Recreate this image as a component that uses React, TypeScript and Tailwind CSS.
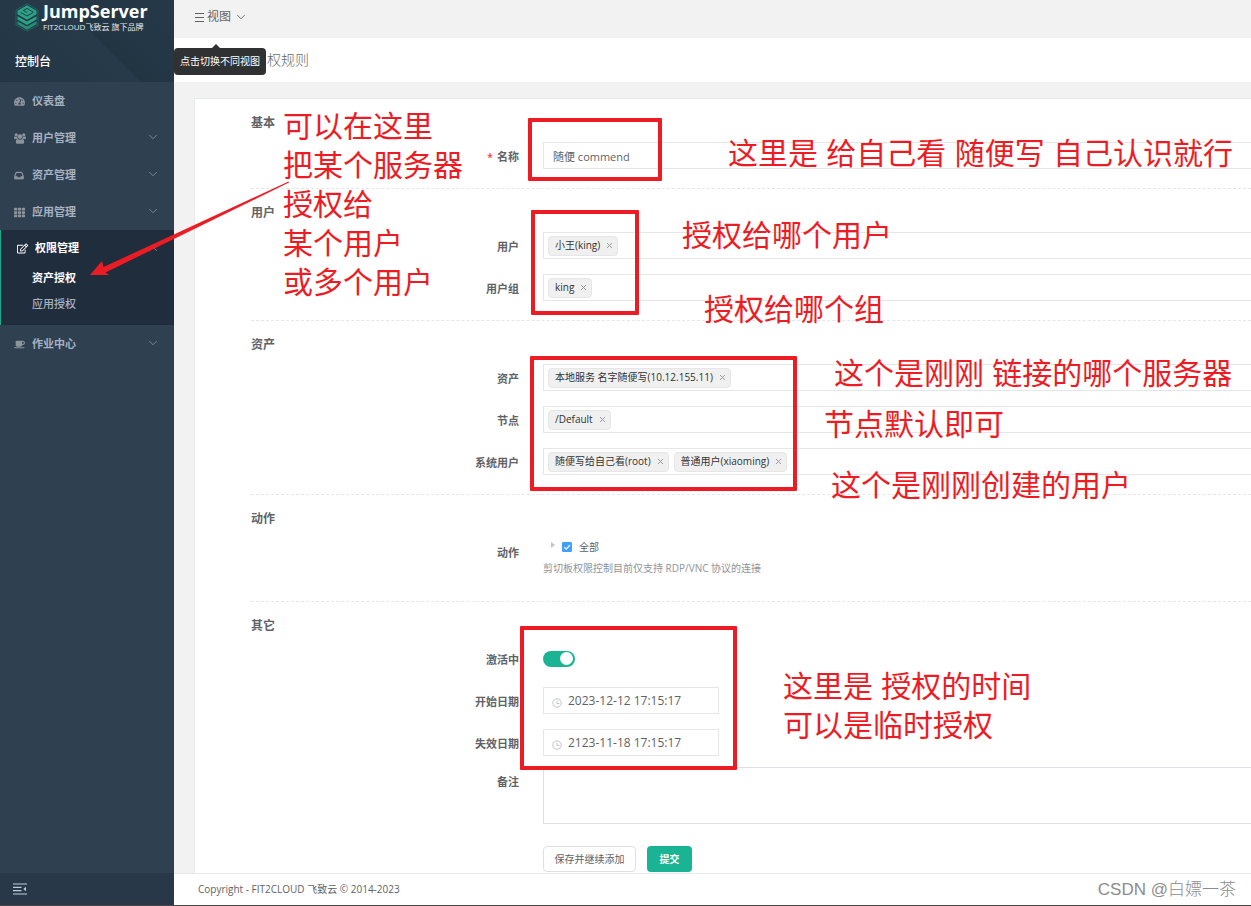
import React, { useState } from 'react';
import { ChevronDown, ChevronUp } from 'lucide-react';
import { FaTachometerAlt, FaTh, FaRegEdit, FaCoffee } from 'react-icons/fa';

const InboxIcon = () => (
  <svg viewBox="0 0 12 10" width="10" height="9" fill="none" stroke="currentColor" strokeWidth="1.4">
    <path d="M1 5.500 2.800 1.200h6.400L11 5.500v3.300H1z" strokeLinejoin="round" />
    <path d="M1 6h2.600l.8 1.500h3.200L8.400 6H11v3H1z" fill="currentColor" strokeWidth="0.6" />
  </svg>
);

const UsersIcon = () => (
  <svg viewBox="0 0 12 11" width="12" height="11" fill="currentColor">
    <circle cx="2.200" cy="1.900" r="1.600" />
    <circle cx="9.800" cy="1.900" r="1.600" />
    <circle cx="6" cy="3.600" r="2.300" />
    <path d="M0 5.800V4.900q.1-1.400 1-1.400 1.100.8 2.300.3Q3.300 5 4 5.800H2.700L2.500 6H.5zM12 5.800V4.900q-.1-1.400-1-1.400-1.100.8-2.300.3Q8.700 5 8 5.800h1.300l.2.200h2z" />
    <path d="M1.800 9.200q0-3.200 2-3.200 2.200 1.500 4.400 0 2 0 2 3.200 0 1.600-1.600 1.600H3.400q-1.600 0-1.600-1.600z" />
  </svg>
);

const MENU = [
  { label: '仪表盘', icon: <FaTachometerAlt size={11} />, arrow: false },
  { label: '用户管理', icon: <UsersIcon />, arrow: true },
  { label: '资产管理', icon: <InboxIcon />, arrow: true },
  { label: '应用管理', icon: <FaTh size={11} />, arrow: true },
];

const Logo = () => (
  <svg viewBox="0 0 24 29" width="24" height="29" className="shrink-0">
    <path d="M12 .8 23 7v15L12 28.200 1 22V7z" fill="none" stroke="#1f6f66" strokeWidth="0.8" />
    <path d="M12 2.300 21.500 7.700v3.600L12 16.700 2.500 11.300V7.700z" fill="#2ba286" />
    <path d="M5.500 9.300 12 13l6-3.400M8.300 7.400l3.700-2 6.500 3.800M8.300 7.400 12 9.500" stroke="#22414c" strokeWidth="1" fill="none" />
    <path d="M2.500 13.200l9.500 5.300 9.500-5.300v3.300L12 21.900l-9.500-5.400z" fill="#2ba286" />
    <path d="M2.500 18.300l9.500 5.300 9.500-5.300v3L12 26.700l-9.500-5.400z" fill="#258f7a" />
  </svg>
);

const Sidebar = () => (
  <aside className="flex w-[174px] shrink-0 flex-col bg-[#2f4050] text-[#a7b1c2]">
    <div className="flex h-[82px] flex-col bg-[linear-gradient(45deg,#243646_0%,#263a4a_55%,#223543_55%,#263949_100%)] pl-[15px]">
      <div className="flex h-8 items-end gap-1">
        <Logo />
        <div className="h-8 whitespace-nowrap text-white">
          <div className="h-[22px] text-[18px] font-bold leading-[22px]">JumpServer</div>
          <div className="text-[8px] leading-[10px] text-gray-200">FIT2CLOUD飞致云 旗下品牌</div>
        </div>
      </div>
      <div className="pt-5 text-xs font-medium leading-5 text-white">控制台</div>
    </div>

    <nav className="flex-1 text-[11px] font-semibold">
      {MENU.map((item) => (
        <a key={item.label} href="#" className="flex h-[37px] items-center pl-[14px] pr-[14px] pt-[2px]">
          <span className="w-[18px] text-[#8d939d]">{item.icon}</span>
          <span className="flex-1">{item.label}</span>
          {item.arrow && <ChevronDown size={14} strokeWidth={1.5} className="mb-1 text-[#8591a0]" />}
        </a>
      ))}
      <div className="border-l border-[#19aa8d] bg-[#1f2d3d] pb-2">
        <a href="#" className="flex h-[35px] items-center pl-4 pr-[14px] pt-[2px] text-white">
          <span className="w-[18px]"><FaRegEdit size={11} /></span>
          <span className="flex-1">权限管理</span>
          <ChevronUp size={14} strokeWidth={1.5} className="text-[#8591a0]" />
        </a>
        <a href="#" className="block pl-[31px] leading-[26px] text-white">资产授权</a>
        <a href="#" className="block pl-[31px] font-medium leading-[26px]">应用授权</a>
      </div>
      <a href="#" className="flex h-[37px] items-center pl-[14px] pr-[14px] pt-[2px]">
        <span className="w-[18px] text-[#8d939d]"><FaCoffee size={11} /></span>
        <span className="flex-1">作业中心</span>
        <ChevronDown size={14} strokeWidth={1.5} className="mb-1 text-[#8591a0]" />
      </a>
    </nav>

    <div className="flex h-8 items-center bg-[#283848] pl-[13px]">
      <button type="button" aria-label="收起">
        <svg viewBox="0 0 14 12" width="14" height="12" fill="none" stroke="#bfcbd9" strokeWidth="1.200">
          <path d="M0 1h14M0 4.300h8.500M0 7.700h8.500M0 11h14" />
          <path d="M13 3.800v4.400L10.300 6z" fill="#bfcbd9" stroke="none" />
        </svg>
      </button>
    </div>
  </aside>
);

interface RowProps {
  id: string;
  label: string;
  required?: boolean;
  children: React.ReactNode;
}

const Row: React.FC<RowProps> = ({ id, label, required, children }) => (
  <div className="flex gap-6">
    <label htmlFor={id} className="h-[27px] w-[268px] shrink-0 text-right text-[11px] font-semibold leading-[30px] text-[#606266]">
      {required && <span className="mr-1 text-[#e8474c]">*</span>}
      {label}
    </label>
    <div className="min-w-0 flex-1">{children}</div>
  </div>
);

const Section: React.FC<{ title: string; last?: boolean; children: React.ReactNode }> = ({ title, last, children }) => (
  <section className={last ? 'pt-3' : 'border-b border-dashed border-[#e4e7ea] pb-[19px] pt-3'}>
    <h3 className="mb-[7px] text-xs font-semibold leading-6 text-[#606266]">{title}</h3>
    <div className="flex flex-col gap-[15px]">{children}</div>
  </section>
);

const TagSelect: React.FC<{ id: string; tags: string[] }> = ({ id, tags }) => {
  const [items, setItems] = useState(tags);
  return (
    <div className="flex h-[27px] items-center gap-[5px] border border-r-0 border-[#e5e6e7] pl-1">
      {items.map((tag) => (
        <span key={tag} className="flex h-5 items-center gap-[6px] whitespace-nowrap rounded-sm border border-[#e6e6e6] bg-[#f0f0f0] pl-[6px] pr-1 text-[10px] text-[#303133]">
          {tag}
          <button type="button" aria-label={`移除 ${tag}`} onClick={() => setItems(items.filter((t) => t !== tag))}>
            <svg viewBox="0 0 7 7" width="7" height="7" stroke="#909399" strokeWidth="0.9">
              <path d="M1 1l5 5M6 1 1 6" />
            </svg>
          </button>
        </span>
      ))}
      <input id={id} type="text" className="min-w-0 flex-1 text-[11px] outline-none" />
    </div>
  );
};

const DateField: React.FC<{ id: string; value: string }> = ({ id, value }) => (
  <div className="flex h-[27px] w-44 items-center gap-[6px] border border-[#e5e6e7] pl-2">
    <svg viewBox="0 0 10 10" width="10" height="10" fill="none" stroke="#c0c4cc" className="mt-1 shrink-0">
      <circle cx="5" cy="5" r="4.200" />
      <path d="M5 2.500v3h2.500" />
    </svg>
    <input id={id} type="text" defaultValue={value} className="min-w-0 flex-1 text-xs text-[#606266] outline-none" />
  </div>
);

const PermissionForm = () => (
  <form onSubmit={(e) => e.preventDefault()} className="border border-r-0 border-[#e7eaec] bg-white pb-8 pl-14">
    <Section title="基本">
      <Row id="name" label="名称" required>
        <input
          id="name"
          type="text"
          defaultValue="随便 commend"
          className="block h-[27px] w-full border border-r-0 border-[#e5e6e7] px-[9px] text-[11px] text-[#606266] outline-none"
        />
      </Row>
    </Section>
    <Section title="用户">
      <Row id="users" label="用户"><TagSelect id="users" tags={['小王(king)']} /></Row>
      <Row id="groups" label="用户组"><TagSelect id="groups" tags={['king']} /></Row>
    </Section>
    <Section title="资产">
      <Row id="assets" label="资产"><TagSelect id="assets" tags={['本地服务 名字随便写(10.12.155.11)']} /></Row>
      <Row id="nodes" label="节点"><TagSelect id="nodes" tags={['/Default']} /></Row>
      <Row id="system" label="系统用户"><TagSelect id="system" tags={['随便写给自己看(root)', '普通用户(xiaoming)']} /></Row>
    </Section>
    <Section title="动作">
      <Row id="actions" label="动作">
        <div className="flex h-[18px] items-center pl-2 text-[#606266]">
          <svg viewBox="0 0 4 6" width="4" height="6" className="mb-1 mr-[7px]"><path d="M0 0l4 3-4 3z" fill="#c0c4cc" /></svg>
          <span className="relative mr-[7px] flex">
            <input id="actions" type="checkbox" defaultChecked className="peer size-[10px] appearance-none rounded-[1px] border border-[#c0c4cc] checked:border-[#409eff] checked:bg-[#409eff]" />
            <svg viewBox="0 0 10 10" width="10" height="10" className="pointer-events-none absolute inset-0 hidden peer-checked:block">
              <path d="M2.200 5.200 4.200 7.200 8 3" fill="none" stroke="#fff" strokeWidth="1.200" />
            </svg>
          </span>
          <span className="text-[10px]">全部</span>
        </div>
        <p className="mt-[2px] h-6 text-[10px] leading-5 text-[#909399]">剪切板权限控制目前仅支持 RDP/VNC 协议的连接</p>
      </Row>
    </Section>
    <Section title="其它" last>
      <Row id="active" label="激活中">
        <div className="flex h-[27px] items-center">
          <input
            id="active"
            type="checkbox"
            role="switch"
            defaultChecked
            className="flex h-4 w-8 appearance-none items-center rounded-full bg-[#dcdfe6] px-[2px] before:size-[13px] before:rounded-full before:bg-white checked:justify-end checked:bg-[#1ab394]"
          />
        </div>
      </Row>
      <Row id="start" label="开始日期"><DateField id="start" value="2023-12-12 17:15:17" /></Row>
      <Row id="expired" label="失效日期"><DateField id="expired" value="2123-11-18 17:15:17" /></Row>
      <div className="-mt-1">
        <Row id="comment" label="备注">
          <textarea id="comment" className="block h-[57px] w-full resize-none border border-r-0 border-[#dcdfe6] px-[9px] text-[11px] outline-none" />
        </Row>
      </div>
    </Section>
    <div className="ml-[292px] mt-[22px] flex gap-[11px] text-[10px]">
      <button type="button" className="h-[26px] w-[93px] rounded-sm border border-[#dcdfe6] bg-white text-[#606266]">保存并继续添加</button>
      <button type="submit" className="h-[26px] w-[45px] rounded-sm bg-[#1ab394] font-semibold text-white">提交</button>
    </div>
  </form>
);

// Red marker notes drawn over the page
const Annotations = () => (
  <div className="pointer-events-none absolute inset-0 overflow-hidden whitespace-nowrap font-['Liberation_Sans','Noto_Sans_CJK_SC',sans-serif] text-[30px] leading-[39px] text-[#ed1c24]">
    <div className="absolute left-[528px] top-[118px] h-[63px] w-[134px] rounded-[1px] border-4 border-[#ed1c24]" />
    <div className="absolute left-[531px] top-[210px] h-[105px] w-[108px] rounded-[1px] border-4 border-[#ed1c24]" />
    <div className="absolute left-[530px] top-[356px] h-[135px] w-[267px] rounded-[1px] border-4 border-[#ed1c24]" />
    <div className="absolute left-[520px] top-[626px] h-[144px] w-[217px] rounded-[1px] border-4 border-[#ed1c24]" />
    <svg viewBox="0 0 202 96" width="202" height="96" className="absolute left-[89px] top-[181px]">
      <path d="M1 94 13 80l1.500 6L199.500.500l.5 1L16.500 91.500 20 94z" fill="#ed1c24" />
    </svg>
    <p className="absolute left-[283px] top-[107px]">
      可以在这里<br />把某个服务器<br />授权给<br />某个用户<br />或多个用户
    </p>
    <p className="absolute left-[728px] top-[134px]">这里是 给自己看 随便写 自己认识就行</p>
    <p className="absolute left-[682px] top-[216px]">授权给哪个用户</p>
    <p className="absolute left-[704px] top-[290px]">授权给哪个组</p>
    <p className="absolute left-[834px] top-[354px]">这个是刚刚 链接的哪个服务器</p>
    <p className="absolute left-[824px] top-[405px]">节点默认即可</p>
    <p className="absolute left-[831px] top-[466px]">这个是刚刚创建的用户</p>
    <p className="absolute left-[783px] top-[667px]">这里是 授权的时间<br />可以是临时授权</p>
  </div>
);

const App: React.FC = () => (
  <div className="relative flex h-screen flex-col overflow-hidden border-b border-[#4d4446] bg-white font-['Open_Sans','Noto_Sans_CJK_SC',sans-serif]">
    <div className="flex min-h-0 flex-1">
      <Sidebar />
      <div className="flex min-w-0 flex-1 flex-col">
        <header className="flex h-[38px] shrink-0 items-center bg-[#f2f2f2] pb-1 pl-[21px] text-[#606266]">
          <div className="relative">
            <button type="button" className="flex items-center gap-[3px] text-xs">
              <svg viewBox="0 0 9 9" width="9" height="9" stroke="currentColor" strokeWidth="1"><path d="M0 .5h9M0 4.500h9M0 8.500h9" /></svg>
              视图
              <ChevronDown size={14} strokeWidth={1.5} />
            </button>
            <div role="tooltip" className="absolute -left-[21px] top-[39px] whitespace-nowrap rounded bg-[#303133] px-[6px] text-[10px] leading-[27px] text-white">
              <span className="absolute -top-1 left-[37px] border-x-[5px] border-b-[5px] border-x-transparent border-b-[#303133]" />
              点击切换不同视图
            </div>
          </div>
        </header>
        <h1 className="h-11 shrink-0 bg-white pl-[93px] text-sm font-light leading-[44px] text-[#676a6c]">权规则</h1>
        <main className="min-h-0 flex-1 overflow-hidden bg-[#f2f2f3] pl-5 pt-4">
          <PermissionForm />
        </main>
        <footer className="flex h-8 shrink-0 items-center justify-between border-t border-[#e7eaec] bg-white pl-6 pr-[15px] text-[10px] text-[#606266]">
          <span>Copyright - FIT2CLOUD 飞致云 © 2014-2023</span>
          <span className="font-['Liberation_Sans','Noto_Sans_CJK_SC',sans-serif] text-[17px] font-light text-[#8c8c8c]">CSDN @白嫖一茶</span>
        </footer>
      </div>
    </div>
    <Annotations />
  </div>
);

export default App;
